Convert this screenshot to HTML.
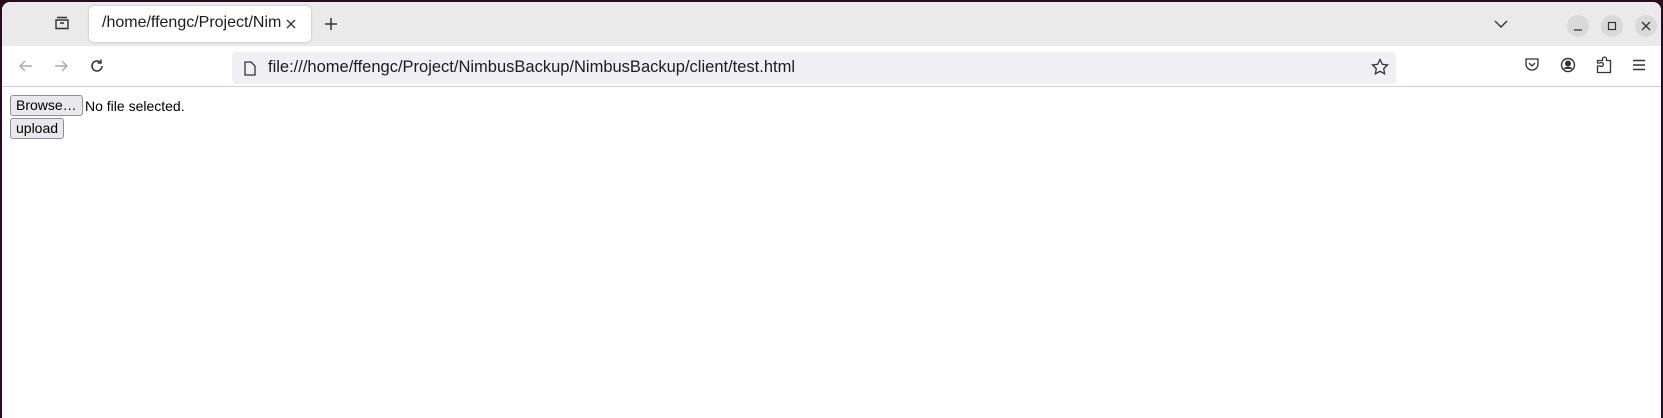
<!DOCTYPE html>
<html><head><style>
body{margin:0;width:1663px;height:418px;background:#2a0a1e;overflow:hidden;position:relative;font-family:"Liberation Sans","DejaVu Sans",sans-serif}
.win{position:absolute;left:2px;top:2px;right:2px;bottom:0;background:#fff;border-radius:8px 8px 0 0;overflow:hidden}
.tabs{position:absolute;left:0;top:0;right:0;height:44px;background:#eaeaea}
.tab{position:absolute;left:87px;top:4px;width:222px;height:36px;background:#fff;border-radius:5px;box-shadow:0 0 2px rgba(0,0,0,.25)}
.tab span{position:absolute;left:13px;top:8px;font-size:16px;color:#1c1b22;white-space:nowrap;width:180px;overflow:hidden}
.tool{position:absolute;left:0;top:44px;right:0;height:40px;background:#fff;border-bottom:1px solid #cfcfd8}
.url{position:absolute;left:230px;top:6px;width:1164px;height:32px;background:#f0f0f4;border-radius:4px}
.url span{position:absolute;left:36px;top:6px;font-size:16.5px;color:#1c1b22;white-space:nowrap}
svg{position:absolute}
.btn{position:absolute;background:#e9e9ed;border:1px solid #8f8f9d;border-radius:3px;font-size:14px;color:#000;line-height:19px;padding:0 5px}
.wb{position:absolute;top:13px;width:22px;height:22px;border-radius:50%;background:#d9d9d9}
</style></head><body>
<div class="win">
<div class="tabs">
<svg style="left:52px;top:13px" width="16" height="16" viewBox="0 0 16 16" fill="none" stroke="#333" stroke-width="1.4"><path d="M3 2.5h10M2 5h12v8.5H2z"/><path d="M6 8h4"/></svg>
<div class="tab"><span>/home/ffengc/Project/NimbusBackup</span>
<svg style="left:196px;top:12px" width="12" height="12" viewBox="0 0 12 12" stroke="#333" stroke-width="1.3"><path d="M2 2l8 8M10 2l-8 8"/></svg></div>
<svg style="left:322px;top:15px" width="14" height="14" viewBox="0 0 14 14" stroke="#333" stroke-width="1.5"><path d="M7 1v12M1 7h12"/></svg>
<svg style="left:1492px;top:17px" width="14" height="10" viewBox="0 0 14 10" fill="none" stroke="#333" stroke-width="1.4"><path d="M1 2l6 6 6-6"/></svg>
<div class="wb" style="left:1565px"></div><div class="wb" style="left:1599px"></div><div class="wb" style="left:1633px"></div>
<svg style="left:1570px;top:18px" width="12" height="12" stroke="#333" stroke-width="1.2" fill="none"><path d="M2 10h8"/></svg>
<svg style="left:1604px;top:18px" width="12" height="12" stroke="#333" stroke-width="1.2" fill="none"><rect x="2.5" y="2.5" width="7" height="7"/></svg>
<svg style="left:1638px;top:18px" width="12" height="12" stroke="#333" stroke-width="1.3"><path d="M2 2l8 8M10 2l-8 8"/></svg>
</div>
<div class="tool">
<svg style="left:16px;top:12px" width="16" height="16" fill="none" stroke="#aaa" stroke-width="1.4"><path d="M14 8H2M7 3L2 8l5 5"/></svg>
<svg style="left:51px;top:12px" width="16" height="16" fill="none" stroke="#aaa" stroke-width="1.4"><path d="M2 8h12M9 3l5 5-5 5"/></svg>
<svg style="left:87px;top:12px" width="16" height="16" fill="none" stroke="#333" stroke-width="1.5"><path d="M13 8a5 5 0 1 1-2-4"/><path d="M12 1.5v3.5H8.5"/></svg>
<div class="url"><svg style="left:11px;top:9px" width="14" height="15" fill="none" stroke="#333" stroke-width="1.3"><path d="M2 1h6l4 4v9H2z"/></svg><span>file:///home/ffengc/Project/NimbusBackup/NimbusBackup/client/test.html</span>
<svg style="left:1139px;top:6px" width="18" height="18" fill="none" stroke="#333" stroke-width="1.3"><path d="M9 1.5l2.3 4.8 5.2.7-3.8 3.6.9 5.2L9 13.3l-4.6 2.5.9-5.2L1.5 7l5.2-.7z"/></svg></div>
<svg style="left:1522px;top:11px" width="16" height="16" fill="none" stroke="#333" stroke-width="1.3"><path d="M2 2h12v5a6 6 0 0 1-12 0z"/><path d="M5 6l3 3 3-3"/></svg>
<svg style="left:1558px;top:11px" width="16" height="16" fill="none" stroke="#333" stroke-width="1.4"><circle cx="8" cy="8" r="6.5"/><circle cx="8" cy="6.5" r="2.3" fill="#333"/><path d="M4 12c1.5-2 6.5-2 8 0" fill="#333"/></svg>
<svg style="left:1594px;top:10px" width="16" height="18" fill="none" stroke="#333" stroke-width="1.3"><path d="M1.5 16.5V10h2.5a2 2 0 1 0 0-3H1.5V4.5h5V3a2 2 0 1 1 4 0v1.5h4v12z"/></svg>
<svg style="left:1630px;top:12px" width="14" height="14" stroke="#333" stroke-width="1.4"><path d="M1 2.5h12M1 7h12M1 11.5h12"/></svg>
</div>
<div class="btn" style="left:8px;top:93px">Browse…</div>
<div style="position:absolute;left:83px;top:96px;font-size:14px">No file selected.</div>
<div class="btn" style="left:8px;top:116px">upload</div>
</div>
</body></html>
